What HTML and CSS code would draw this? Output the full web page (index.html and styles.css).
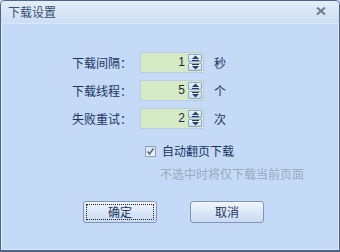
FILE: index.html
```html
<!DOCTYPE html>
<html>
<head>
<meta charset="utf-8">
<link rel="stylesheet" href="styles.css">
</head>
<body>
<div class="window">
  <div class="titlebar">
    <span class="title">下载设置</span>
    <svg class="close" width="10" height="8" viewBox="0 0 10 8"><path d="M1 0.5 L9 7.5 M9 0.5 L1 7.5" stroke="#6f7b8e" stroke-width="2"/></svg>
  </div>
  <div class="content">
    <div class="form">
      <div class="label">下载间隔：</div>
      <div class="spin"><div class="num">1</div><div class="arrows"><div class="ab up"><svg width="9" height="6" viewBox="0 0 9 6"><path d="M4.5 0.5 L8 4 L1 4 Z" fill="#2b3f60"/><path d="M1 5.5 H8" stroke="#2b3f60"/></svg></div><div class="ab down"><svg width="9" height="6" viewBox="0 0 9 6"><path d="M1 0.5 H8" stroke="#2b3f60"/><path d="M1 2 L8 2 L4.5 5.5 Z" fill="#2b3f60"/></svg></div></div></div>
      <div class="unit">秒</div>
      <div class="label">下载线程：</div>
      <div class="spin"><div class="num">5</div><div class="arrows"><div class="ab up"><svg width="9" height="6" viewBox="0 0 9 6"><path d="M4.5 0.5 L8 4 L1 4 Z" fill="#2b3f60"/><path d="M1 5.5 H8" stroke="#2b3f60"/></svg></div><div class="ab down"><svg width="9" height="6" viewBox="0 0 9 6"><path d="M1 0.5 H8" stroke="#2b3f60"/><path d="M1 2 L8 2 L4.5 5.5 Z" fill="#2b3f60"/></svg></div></div></div>
      <div class="unit">个</div>
      <div class="label">失败重试：</div>
      <div class="spin"><div class="num">2</div><div class="arrows"><div class="ab up"><svg width="9" height="6" viewBox="0 0 9 6"><path d="M4.5 0.5 L8 4 L1 4 Z" fill="#2b3f60"/><path d="M1 5.5 H8" stroke="#2b3f60"/></svg></div><div class="ab down"><svg width="9" height="6" viewBox="0 0 9 6"><path d="M1 0.5 H8" stroke="#2b3f60"/><path d="M1 2 L8 2 L4.5 5.5 Z" fill="#2b3f60"/></svg></div></div></div>
      <div class="unit">次</div>
    </div>
    <div class="check">
      <span class="box"><svg width="9" height="9" viewBox="0 0 9 9"><path d="M1.5 4.5 L3.5 7 L7.5 1.5" stroke="#5b6b80" stroke-width="1.6" fill="none"/></svg></span>
      <span class="check-text">自动翻页下载</span>
    </div>
    <div class="hint">不选中时将仅下载当前页面</div>
    <div class="buttons">
      <div class="btn focus"><span>确定</span></div>
      <div class="btn"><span>取消</span></div>
    </div>
  </div>
</div>
</body>
</html>
```

FILE: styles.css
```css
* { box-sizing: border-box; }
html, body { margin: 0; padding: 0; }
body {
  width: 340px;
  height: 252px;
  font-family: "Noto Sans CJK SC", "Liberation Sans", sans-serif;
  font-size: 12px;
  background: #c4daf7;
}
.window {
  width: 340px;
  height: 252px;
  border: 1px solid #4f6585;
  border-bottom-width: 2px;
  border-radius: 5px 5px 0 0;
  background: #c4daf7;
  overflow: hidden;
  display: flex;
  flex-direction: column;
  box-shadow: inset 1px 0 0 #dbe8f9, inset -1px 0 0 #dbe8f9, inset 0 -1px 0 #dbe8f9;
}
.titlebar {
  height: 23px;
  flex: none;
  display: flex;
  align-items: center;
  justify-content: space-between;
  padding: 0 13px 0 7px;
  background: linear-gradient(#e3edf9, #d3e2f4 70%, #cddef3);
  border-bottom: 1px solid #d9e6f7;
}
.title {
  color: #3a4f70;
  font-size: 12px;
  line-height: 14px;
  margin-top: -1px;
}
.close { display: block; margin-top: -2px; }
.content {
  flex: 1;
  display: flex;
  flex-direction: column;
}
.form {
  margin-top: 28px;
  margin-left: 71px;
  display: grid;
  grid-template-columns: 68px 64px auto;
  grid-auto-rows: 21px;
  row-gap: 7px;
  align-items: center;
}
.label, .unit {
  color: #1b3560;
  line-height: 14px;
}
.unit { margin-left: 10px; }
.spin {
  height: 21px;
  display: flex;
  border: 1px solid #b9cce3;
  background: #d5ebc6;
}
.num {
  flex: 1;
  text-align: right;
  padding-right: 3px;
  line-height: 19px;
  color: #1a2a40;
  font-family: "Liberation Sans", sans-serif;
  font-size: 12px;
}
.arrows {
  width: 15px;
  display: flex;
  flex-direction: column;
  gap: 1px;
  padding: 1px 1px 1px 0;
}
.ab {
  flex: 1;
  display: flex;
  align-items: center;
  justify-content: center;
  border: 1px solid #8ea7c8;
  border-radius: 1px;
  background: linear-gradient(#eef4fc, #c9dbf2);
}
.ab svg { display: block; }
.check {
  margin-top: 15px;
  margin-left: 144px;
  display: flex;
  align-items: center;
  gap: 6px;
  height: 14px;
}
.box {
  width: 11px;
  height: 11px;
  border: 1px solid #8ca2c2;
  background: linear-gradient(#d9e3ef, #eef3f9);
  display: flex;
  align-items: center;
  justify-content: center;
}
.box svg { display: block; }
.check-text {
  color: #1b3560;
  line-height: 14px;
}
.hint {
  margin-top: 9px;
  margin-left: 159px;
  color: #9aaac0;
  line-height: 14px;
}
.buttons {
  margin-top: 20px;
  margin-left: 82px;
  display: flex;
  gap: 33px;
}
.btn {
  width: 74px;
  height: 22px;
  border: 1px solid #7f96b6;
  border-radius: 3px;
  background: linear-gradient(#f3f7fd, #dbe7f7 50%, #c9daf2);
  display: flex;
  align-items: center;
  justify-content: center;
  color: #1b3560;
  padding: 2px;
}
.btn span {
  flex: 1;
  align-self: stretch;
  display: flex;
  align-items: center;
  justify-content: center;
  line-height: 14px;
  border: 1px dotted transparent;
}
.btn.focus span { border-color: #222; }
```
